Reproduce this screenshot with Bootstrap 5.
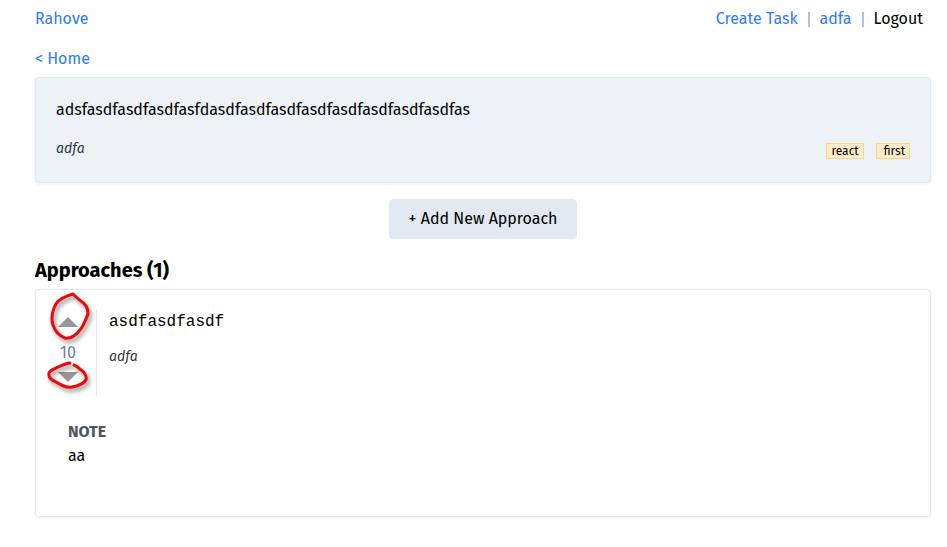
<!DOCTYPE html>
<html lang="en">
<head>
<meta charset="utf-8">
<meta name="viewport" content="width=device-width, initial-scale=1">
<title>Rahove</title>
<link href="https://cdn.jsdelivr.net/npm/bootstrap@5.3.0/dist/css/bootstrap.min.css" rel="stylesheet">
<style>
  body { font-family: "Fira Sans", "Noto Sans", sans-serif; font-size: 16px; line-height: 24px; color: #000; }
  a { color: #2f7bf6; text-decoration: none; }
  .page { padding: 7px 16px 24px 35px; }
  .top-nav { gap: 10px; padding-right: 8px; margin-bottom: 16px; }
  .divider { width: 2px; height: 15px; background: #a9c3e0; }
  .panel { border: 1px solid #e2e8f0; border-radius: 4px; box-shadow: 0 1px 3px rgba(0,0,0,.08); }
  .task { background: #edf2f7; padding: 20px 20px 19px; margin-top: 6px; }
  .author { font-size: 14px; font-style: italic; color: #2d3748; }
  .task-foot { margin-top: 15px; height: 26px; }
  .tags { gap: 12px; padding-top: 6px; }
  .tag { border: 1px solid #fbd38d; background: #feebc8; font-size: 12px; line-height: 14px; padding: 0 4px; }
  .tag + .tag { padding-left: 7px; }
  .btn-add { --bs-btn-bg: #e2e8f0; --bs-btn-color: #000; --bs-btn-border-color: #e2e8f0; --bs-btn-font-size: 16px; --bs-btn-line-height: 24px; --bs-btn-padding-y: 7px; --bs-btn-padding-x: 19px; --bs-btn-border-radius: 4px; --bs-btn-hover-bg: #cbd5e0; --bs-btn-hover-color: #000; margin: 16px 0; }
  .section-title { font-size: 20px; line-height: 30px; font-weight: 700; margin-bottom: 4px; }
  .approach { padding: 20px 20px 48px 32px; }
  .votes { width: 41px; height: 86px; margin-left: -12px; padding-right: 16px; border-right: 1px solid #e2e8f0; }
  .vote { width: 24px; height: 24px; }
  .vote svg { display: block; margin: auto; }
  .count { color: #718096; margin-top: 7px; }
  .code-text { font-family: "Liberation Mono", monospace; font-size: 16px; }
  .approach-body { padding-left: 12px; }
  .approach-body .author { margin-top: 11px; }
  .note-title { font-size: 16px; line-height: 24px; font-weight: 700; color: #4a5568; margin: 24px 0 0; }
  .ink { position: absolute; left: 8px; top: 0; pointer-events: none; filter: drop-shadow(2px 3px 2px rgba(0,0,0,.45)); }
</style>
</head>
<body>
<div class="page">
  <header class="d-flex justify-content-between">
    <a href="#">Rahove</a>
    <nav class="top-nav d-flex align-items-center">
      <a href="#">Create Task</a>
      <span class="divider"></span>
      <a href="#">adfa</a>
      <span class="divider"></span>
      <a href="#" class="text-black">Logout</a>
    </nav>
  </header>
  <main>
    <a href="#">&lt; Home</a>
    <section class="panel task">
      <div class="text-break">adsfasdfasdfasdfasfdasdfasdfasdfasdfasdfasdfasdfasdfas</div>
      <div class="task-foot d-flex justify-content-between align-items-start">
        <span class="author">adfa</span>
        <div class="tags d-flex">
          <span class="tag">react</span>
          <span class="tag">first</span>
        </div>
      </div>
    </section>
    <div class="text-center">
      <button type="button" class="btn btn-add">+ Add New Approach</button>
    </div>
    <h2 class="section-title">Approaches (1)</h2>
    <article class="panel approach position-relative">
      <div class="d-flex">
        <div class="votes d-flex flex-column align-items-center flex-shrink-0">
          <button type="button" class="vote border-0 bg-transparent p-0" aria-label="Vote up">
            <svg width="20" height="10" viewBox="0 0 20 10" fill="#969696"><path d="M10 0 20 10H0z"/></svg>
          </button>
          <span class="count">10</span>
          <button type="button" class="vote border-0 bg-transparent p-0" aria-label="Vote down">
            <svg width="20" height="10" viewBox="0 0 20 10" fill="#969696"><path d="M0 0H20L10 10z"/></svg>
          </button>
        </div>
        <div class="approach-body">
          <div class="code-text">asdfasdfasdf</div>
          <div class="author">adfa</div>
        </div>
      </div>
      <h3 class="note-title">NOTE</h3>
      <p class="mb-0">aa</p>
      <svg class="ink" width="52" height="106" viewBox="44 290 52 106" fill="none" stroke="#f00808" stroke-width="3" stroke-linecap="round" stroke-linejoin="round" aria-hidden="true">
        <path d="M73 294C69 295 66 296 63 298C58 300 56 303 54 308C52 313 51 319 53 325C55 331 60 336 65 338C71 339 76 335 80 330C84 325 86 319 88 314C88 309 86 304 81 301C78 299 76 297 73 294"/>
        <path d="M70 363C66 363 61 366 56 368C51 370 48 372 49 375C49 379 52 380 56 382C61 385 66 388 72 387C78 386 83 384 86 380C87 376 84 372 81 370C79 368 77 366 74 365"/>
      </svg>
    </article>
  </main>
</div>
<script src="https://cdn.jsdelivr.net/npm/bootstrap@5.3.0/dist/js/bootstrap.bundle.min.js"></script>
</body>
</html>
